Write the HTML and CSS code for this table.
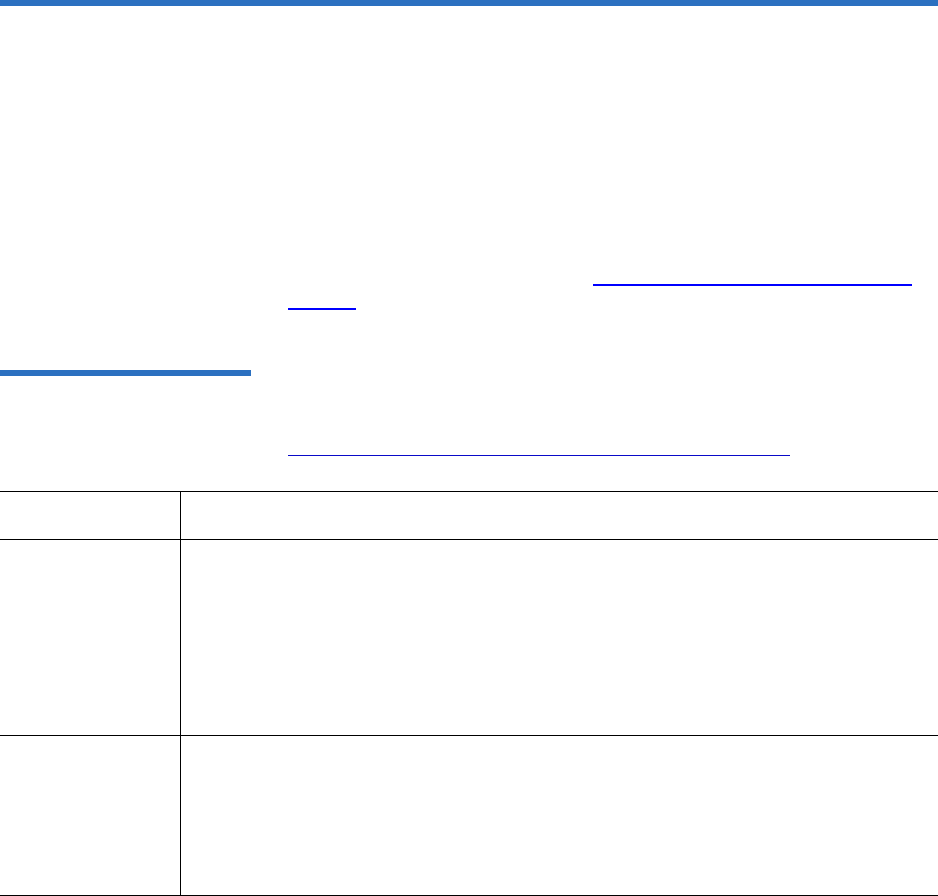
FILE: index.html
```html
<!DOCTYPE html>
<html lang="en">
<head>
<meta charset="utf-8">
<title>Document page</title>
<link rel="stylesheet" href="styles.css">
</head>
<body>
<div class="page">
  <div class="topbar"></div>
  <div class="para">
    <a class="link link-first" href="#"></a>
    <a class="link link-second" href="#"></a>
  </div>
  <div class="section-bar"></div>
  <div class="caption-rule"></div>
  <div class="table">
    <div class="cell cell-key head"></div>
    <div class="cell cell-val head"></div>
    <div class="cell cell-key row-a"></div>
    <div class="cell cell-val row-a"></div>
    <div class="cell cell-key row-b"></div>
    <div class="cell cell-val row-b"></div>
  </div>
</div>
</body>
</html>
```

FILE: styles.css
```css
html, body {
  margin: 0;
  padding: 0;
  background: #ffffff;
  font-family: "Liberation Sans", Arial, sans-serif;
}

.page {
  display: flex;
  flex-direction: column;
  width: 938px;
  overflow: hidden;
}

.topbar {
  height: 6px;
  background: #2b70c0;
}

.para {
  margin-top: 278px;
  padding-left: 288px;
  display: flex;
  flex-direction: column;
  align-items: flex-start;
}

.link {
  display: block;
  height: 2px;
  background: #0000ff;
}

.link-first {
  margin-left: 305px;
  width: 319px;
}

.link-second {
  margin-top: 22px;
  width: 68px;
}

.section-bar {
  margin-top: 60px;
  width: 251px;
  height: 6px;
  background: #2b70c0;
}

.caption-rule {
  margin-top: 79px;
  margin-left: 288px;
  width: 502px;
  height: 1px;
  background: #0a0ac8;
}

.table {
  margin-top: 35px;
  display: grid;
  grid-template-columns: 181px 1fr;
  border-top: 1px solid #000;
}

.cell {
  border-bottom: 1px solid #000;
}

.cell-key {
  border-right: 1px solid #000;
}

.head { height: 47px; }
.row-a { height: 195px; }
.row-b { height: 159px; }
```
